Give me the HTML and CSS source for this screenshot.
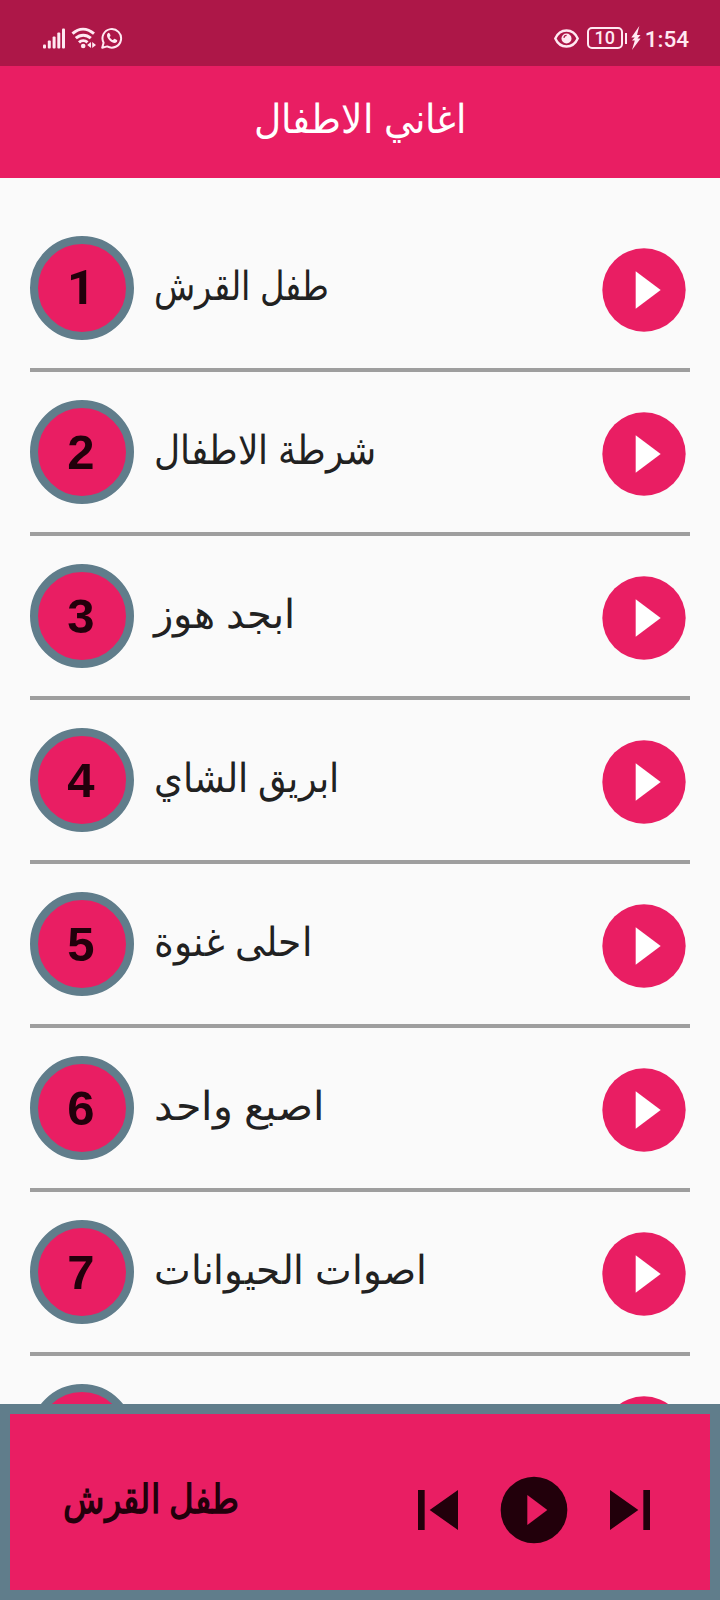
FILE: index.html
```html
<!DOCTYPE html>
<html lang="ar">
<head>
    <meta charset="UTF-8">
    <meta name="viewport" content="width=device-width, initial-scale=1.0">
    <title>اغاني الاطفال</title>
    <link rel="stylesheet" href="styles.css">
</head>
<body>

    <!-- shared icons -->
    <svg class="sprite">
        <symbol id="icon-play" viewBox="0 0 24 24">
            <circle cx="12" cy="12" r="10" fill="currentColor"/>
            <path d="M10 7.5v9l6-4.5z"/>
        </symbol>
    </svg>

    <div class="status-bar">
        <div class="status-left">
            <svg width="23" height="21" viewBox="0 0 23 21" fill="currentColor">
                <rect x="0" y="16.5" width="3" height="4" rx="1"/>
                <rect x="4.8" y="12.5" width="3" height="8" rx="1"/>
                <rect x="9.6" y="8.5" width="3" height="12" rx="1"/>
                <rect x="14.3" y="4.5" width="3" height="16" rx="1"/>
                <rect x="19" y="0.5" width="3" height="20" rx="1"/>
            </svg>
            <svg class="wifi" width="26" height="22" viewBox="0 0 26 22" fill="none" stroke="currentColor" stroke-width="3">
                <path d="M1.5 6.6C8 .7 16 .7 23 6.600"/>
                <path d="M4.800 11.200c4.500-4 10.500-4 15 0"/>
                <path d="M8 15.400c2.500-2.300 6-2.300 8.500 0"/>
                <circle cx="12.200" cy="19" r="2.300" fill="currentColor" stroke="none"/>
                <path d="M20 15v6l-3.800-3zM21.200 15v6l3.800-3z" fill="currentColor" stroke="none"/>
            </svg>
            <svg class="whatsapp" width="22" height="22" viewBox="0 0 22 22">
                <path d="M1.200 20.800l1.400-5.100A9.300 9.300 0 1 1 6.200 19.400z" fill="none" stroke="currentColor" stroke-width="2" stroke-linejoin="round"/>
                <path d="M7.700 5.700c-.5 0-1.700 1-1.700 2.500 0 3.800 4.600 7.700 7.600 7.700 1.500 0 2.700-1.200 2.700-2.400 0-.4-2.400-1.700-2.900-1.700-.6 0-1 1.300-1.500 1.300-.9 0-3.300-2.300-3.300-3 0-.5.9-.8.9-1.400 0-.6-.8-3-1.800-3z" fill="currentColor"/>
            </svg>
        </div>
        <div class="status-right">
            <svg width="25" height="19" viewBox="0 0 25 19">
                <path d="M1.300 9.500C3.500 4.500 7.500 1.500 12.500 1.500s9 3 11.200 8c-2.200 5-6.200 8-11.200 8s-9-3-11.200-8z" fill="none" stroke="currentColor" stroke-width="2.400"/>
                <circle cx="12.500" cy="9.500" r="5" fill="currentColor"/>
                <path d="M10 9a2.600 2.600 0 0 1 2.600-2.600" fill="none" stroke="#ad1748" stroke-width="1.100"/>
            </svg>
            <span class="battery">10</span>
            <span class="battery-tip"></span>
            <svg width="10" height="24" viewBox="0 0 10 24">
                <path d="M8.300 0L.3 11.500h3.500L1 14.500h2.800L1 24l8.600-11.500H6.500L9.500 9H6z" fill="currentColor"/>
            </svg>
            <span class="clock">1:54</span>
        </div>
    </div>

    <header class="header">
        <h1 dir="rtl">اغاني الاطفال</h1>
    </header>

    <div class="songs">
        <div class="song">
            <span class="number one">1</span>
            <span class="name" dir="rtl">طفل القرش</span>
            <svg class="play"><use href="#icon-play"/></svg>
        </div>
        <div class="song">
            <span class="number">2</span>
            <span class="name" dir="rtl">شرطة الاطفال</span>
            <svg class="play"><use href="#icon-play"/></svg>
        </div>
        <div class="song">
            <span class="number">3</span>
            <span class="name" dir="rtl">ابجد هوز</span>
            <svg class="play"><use href="#icon-play"/></svg>
        </div>
        <div class="song">
            <span class="number">4</span>
            <span class="name" dir="rtl">ابريق الشاي</span>
            <svg class="play"><use href="#icon-play"/></svg>
        </div>
        <div class="song">
            <span class="number">5</span>
            <span class="name" dir="rtl">احلى غنوة</span>
            <svg class="play"><use href="#icon-play"/></svg>
        </div>
        <div class="song">
            <span class="number">6</span>
            <span class="name" dir="rtl">اصبع واحد</span>
            <svg class="play"><use href="#icon-play"/></svg>
        </div>
        <div class="song">
            <span class="number">7</span>
            <span class="name" dir="rtl">اصوات الحيوانات</span>
            <svg class="play"><use href="#icon-play"/></svg>
        </div>
        <div class="song">
            <span class="number"></span>
            <svg class="play"><use href="#icon-play"/></svg>
        </div>
    </div>

    <div class="player">
        <span class="current" dir="rtl">طفل القرش</span>
        <div class="controls">
            <svg viewBox="0 0 24 24"><path d="M6 6h2v12H6zm3.500 6l8.500 6V6z" fill="currentColor"/></svg>
            <svg class="toggle"><use href="#icon-play"/></svg>
            <svg viewBox="0 0 24 24"><path d="M6 18l8.500-6L6 6v12zM16 6v12h2V6h-2z" fill="currentColor"/></svg>
        </div>
    </div>

</body>
</html>
```
FILE: styles.css
```css
* {
    box-sizing: border-box;
}
body {
    margin: 0;
    height: 1600px;
    display: flex;
    flex-direction: column;
    overflow: hidden;
    background: #fafafa;
    color: #212121;
    font-family: "Liberation Sans", Arial, sans-serif;
}
svg {
    display: block;
    flex: none;
}
.sprite {
    position: absolute;
    width: 0;
    height: 0;
}
.status-bar {
    flex: none;
    height: 66px;
    padding: 10px 31px 0 43px;
    display: flex;
    align-items: center;
    justify-content: space-between;
    background: #ad1748;
    color: #ffe9f2;
}
.status-left,
.status-right {
    display: flex;
    align-items: center;
}
.wifi {
    margin-left: 5px;
}
.whatsapp {
    margin-left: 4px;
}
.battery {
    width: 36px;
    height: 22px;
    margin-left: 8px;
    border: 2px solid #ffe9f2;
    border-radius: 5px;
    font: 500 18px/18px Roboto, sans-serif;
    text-align: center;
}
.battery-tip {
    width: 2px;
    height: 11px;
    margin: 0 4px 0 2px;
    background: #ffe9f2;
}
.clock {
    margin-left: 4px;
    padding-top: 2px;
    font: 500 22.5px/26px Roboto, sans-serif;
}
.header {
    flex: none;
    height: 112px;
    padding-bottom: 6px;
    display: flex;
    align-items: center;
    justify-content: center;
    background: #e91e63;
    color: #fff;
}
.header h1 {
    margin: 0;
    font-size: 40px;
    font-weight: normal;
    transform: scaleX(0.94);
}
.songs {
    flex: 1;
    min-height: 0;
    padding: 30px 30px 0;
    overflow: hidden;
}
.song {
    height: 164px;
    display: flex;
    align-items: center;
    border-bottom: 4px solid #9e9e9e;
}
.number {
    width: 104px;
    height: 104px;
    flex: none;
    padding-right: 2px;
    border: 8px solid #607d8b;
    border-radius: 50%;
    background: #e91e63;
    color: #22000b;
    font-size: 49px;
    font-weight: bold;
    line-height: 88px;
    text-align: center;
}
.number.one {
    font-family: Roboto, sans-serif;
}
.name {
    margin-left: 20px;
    padding-bottom: 5px;
    font-size: 40px;
    line-height: 60px;
    white-space: nowrap;
    transform-origin: left;
}
/* condense the longer titles */
.song:nth-child(1) .name {
    transform: scaleX(0.845);
}
.song:nth-child(2) .name {
    transform: scaleX(0.9);
}
.song:nth-child(4) .name {
    transform: scaleX(0.92);
}
.song:nth-child(5) .name {
    transform: scaleX(0.94);
}
.song:nth-child(6) .name {
    transform: scaleX(1.03);
}
.song:nth-child(7) .name {
    transform: scaleX(0.975);
}
.play {
    width: 100px;
    height: 100px;
    margin: 4px -4px 0 auto;
    color: #e91e63;
    fill: #fff;
}
.player {
    flex: none;
    height: 196px;
    padding: 0 40px 0 53px;
    display: flex;
    align-items: center;
    justify-content: space-between;
    border: 10px solid #607d8b;
    background: #e91e63;
    color: #22000b;
}
.current {
    padding-bottom: 6px;
    font-size: 40px;
    font-weight: bold;
    transform: scaleX(0.85);
    transform-origin: left;
}
.controls {
    display: flex;
    gap: 16px;
    margin-top: 16px;
}
.controls svg {
    width: 80px;
    height: 80px;
}
.toggle {
    fill: #e91e63;
}
```
